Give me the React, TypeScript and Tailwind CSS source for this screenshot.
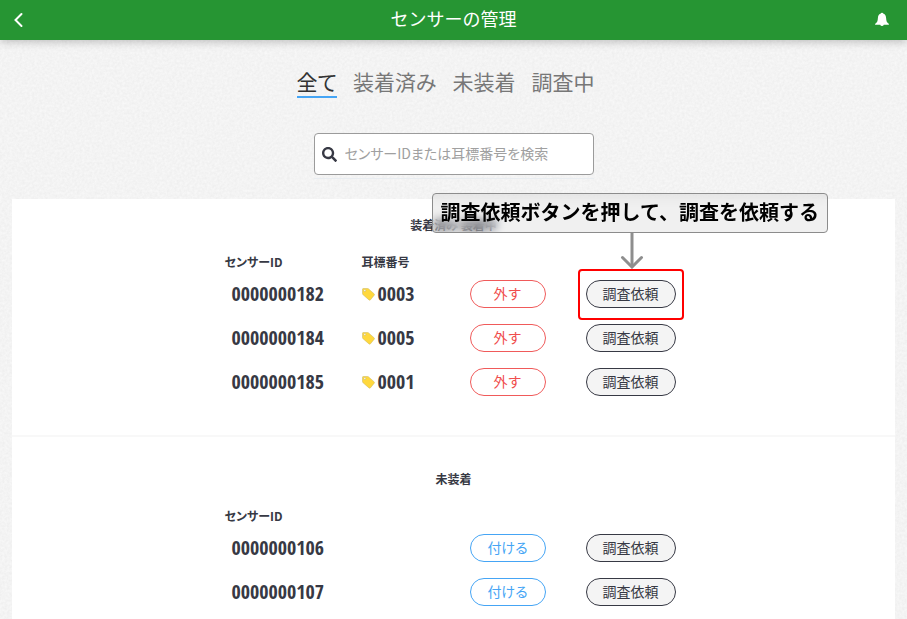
import { useState } from "react";
import { FaSearch } from "react-icons/fa";

type Sensor = { id: string; tag?: string };

const tabs = ["全て", "装着済み", "未装着", "調査中"];

const attached: Sensor[] = [
  { id: "0000000182", tag: "0003" },
  { id: "0000000184", tag: "0005" },
  { id: "0000000185", tag: "0001" },
];

const detached: Sensor[] = [{ id: "0000000106" }, { id: "0000000107" }];

function TagIcon() {
  return (
    <svg className="w-[13px] h-[13px] shrink-0" viewBox="0 0 13 13" aria-hidden="true">
      <path
        d="M1.200.500h4.300c.4 0 .8.100 1.100.400l5.400 4.800c.5.400.6 1 .2 1.500l-3.700 4.600c-.4.500-1 .5-1.500.1L1.100 6.800C.7 6.500.500 6.100.500 5.600V1.200C.500.800.800.500 1.200.500Z"
        fill="#ffd83d"
        stroke="#c9b458"
        strokeWidth=".5"
      />
      <circle cx="2.8" cy="2.6" r="1" fill="#fff" stroke="#b5a55a" strokeWidth=".4" />
    </svg>
  );
}

/* Callout over the first request button */
function Guide() {
  return (
    <div className="pointer-events-none">
      <div className="absolute -inset-x-2 -top-[11px] -bottom-3 border-2 border-[#f00] rounded" />
      <svg
        className="absolute left-[34px] -top-[47px] w-6 h-9"
        viewBox="0 0 24 36"
        fill="none"
        stroke="#8e8e8e"
        aria-hidden="true"
      >
        <path d="M12 0v33" strokeWidth="3" />
        <path d="M2.500 24.500 12 34l9.500-9.500" strokeWidth="3" strokeLinecap="round" />
      </svg>
      <p className="absolute -left-[154px] -top-[87px] h-10 px-2 pb-0.5 flex items-center whitespace-nowrap text-xl font-bold text-black bg-black/6 backdrop-blur-[5px] border border-[#8c8c8c] rounded">
        調査依頼ボタンを押して、調査を依頼する
      </p>
    </div>
  );
}

function SensorSection({
  title,
  sensors,
  guide,
}: {
  title: string;
  sensors: Sensor[];
  guide?: boolean;
}) {
  const isAttached = sensors.some((s) => s.tag);

  return (
    <section>
      <h2 className="text-xs leading-4 font-bold text-center">{title}</h2>
      <table className="mx-auto mt-[18px] w-[458px] table-fixed text-left">
        <thead>
          <tr className="h-[21px] text-xs font-bold [font-feature-settings:'palt']">
            <th className="w-[137px]">センサーID</th>
            <th className="w-[108px]">{isAttached ? "耳標番号" : ""}</th>
            <th className="w-[116px]" />
            <th />
          </tr>
        </thead>
        <tbody>
          {sensors.map((sensor, i) => (
            <tr key={sensor.id} className="h-11">
              <td className="pl-[7px] font-['Open_Sans_Condensed','Noto_Sans_Condensed','Roboto_Condensed',sans-serif] text-xl font-bold">
                {sensor.id}
              </td>
              <td>
                {sensor.tag && (
                  <div className="flex items-center gap-[3px] font-['Open_Sans_Condensed','Noto_Sans_Condensed','Roboto_Condensed',sans-serif] text-xl font-bold">
                    <TagIcon />
                    {sensor.tag}
                  </div>
                )}
              </td>
              <td>
                {isAttached ? (
                  <button className="block w-[76px] h-7 pb-0.5 rounded-full border border-[#f05a5a] text-sm text-[#f04e4e]">
                    外す
                  </button>
                ) : (
                  <button className="block w-[76px] h-7 pb-0.5 rounded-full border border-[#45a5f5] text-sm text-[#45a5f5] [font-feature-settings:'palt']">
                    付ける
                  </button>
                )}
              </td>
              <td>
                <div className="relative w-[90px]">
                  <button className="block w-full h-7 pb-0.5 rounded-full border border-[#373944] bg-[#f4f4f4] text-sm">
                    調査依頼
                  </button>
                  {guide && i === 0 && <Guide />}
                </div>
              </td>
            </tr>
          ))}
        </tbody>
      </table>
    </section>
  );
}

export default function App() {
  const [active, setActive] = useState(tabs[0]);

  return (
    <div className="relative isolate min-h-screen max-h-screen overflow-hidden bg-[#f8f8f8] font-['Noto_Sans_CJK_JP',sans-serif] text-[#373944]">
      {/* Paper grain */}
      <svg className="absolute inset-0 -z-10 w-full h-full opacity-3" aria-hidden="true">
        <filter id="grain" x="0" y="0" width="100%" height="100%" colorInterpolationFilters="sRGB">
          <feTurbulence type="fractalNoise" baseFrequency=".4" numOctaves="3" />
          <feColorMatrix values="1.5 0 0 0 -.25  1.5 0 0 0 -.25  1.5 0 0 0 -.25  0 0 0 0 1" />
        </filter>
        <rect width="100%" height="100%" filter="url(#grain)" />
      </svg>

      <header className="relative flex items-center justify-between h-10 px-[13px] bg-[#269533] text-white shadow-[0_2px_8px_rgba(0,0,0,0.22)]">
        <button aria-label="戻る" className="flex w-6">
          <svg className="w-3 h-4" viewBox="0 0 12 16" fill="none" stroke="currentColor" strokeWidth="2" strokeLinecap="round">
            <path d="M8.500 2 2.500 8l6 6" />
          </svg>
        </button>
        <h1 className="pb-1 text-lg leading-none">センサーの管理</h1>
        <button aria-label="お知らせ" className="flex justify-center w-6">
          <svg className="w-4 h-4" viewBox="0 0 16 16" fill="currentColor">
            <path d="M8 .8c.8 0 1.300.4 1.500 1 1.700.6 2.500 2.100 2.600 4.200.1 3.200.9 4.700 2.600 5.700.5.300.3 1-.3 1h-4.600a1.900 1.900 0 0 1-3.600 0H1.600c-.6 0-.8-.7-.3-1C3 10.700 3.800 9.200 3.900 6c.1-2.100.9-3.600 2.600-4.200.2-.6.700-1 1.500-1Z" />
          </svg>
        </button>
      </header>

      <nav className="flex justify-center gap-4 pt-[27px] pr-4 text-[21px] leading-7 [font-feature-settings:'palt']">
        {tabs.map((tab) => (
          <button
            key={tab}
            onClick={() => setActive(tab)}
            className={
              tab === active
                ? "pb-px border-b-2 border-[#45a5f5] text-[#333]"
                : "pb-px border-b-2 border-transparent text-[#777]"
            }
          >
            {tab}
          </button>
        ))}
      </nav>

      <div className="mx-auto mt-[35px] w-[280px] pb-[3px] border-b border-[#e9edf1]">
        <label className="flex items-center h-[42px] px-[7px] gap-2 bg-white border border-[#9b9b9b] rounded">
          <FaSearch className="size-[15px] shrink-0" />
          <input
            type="text"
            aria-label="検索"
            placeholder="センサーIDまたは耳標番号を検索"
            className="flex-1 min-w-0 pb-0.5 text-sm outline-none placeholder:text-[#a0a0a0] [font-feature-settings:'palt']"
          />
        </label>
      </div>

      <main className="mx-3 mt-5 pt-[18px] pb-8 bg-white">
        <SensorSection title="装着済み 装着中" sensors={attached} guide />
        <hr className="mt-[31px] mb-[34px] border-t-2 border-[#f8f8f8]" />
        <SensorSection title="未装着" sensors={detached} />
      </main>
    </div>
  );
}
